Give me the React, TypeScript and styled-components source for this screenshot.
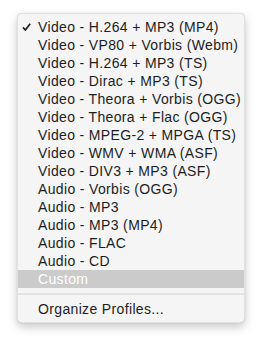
import React from 'react';
import styled, { createGlobalStyle } from 'styled-components';

const GlobalStyle = createGlobalStyle`
    html, body {
        margin: 0;
        padding: 0;
        background: #ffffff;
        width: 262px;
        height: 342px;
        overflow: hidden;
    }
`;

const Page = styled.div`
    padding: 13px 17px 0 17px;
`;

const Menu = styled.div`
    width: 228px;
    box-sizing: border-box;
    padding: 4px 0 4px 0;
    background: #f5f5f5;
    border-radius: 5px;
    border: 1px solid rgba(0, 0, 0, 0.08);
    box-shadow: 0 4px 10px rgba(0, 0, 0, 0.22), 0 0 1px rgba(0, 0, 0, 0.2);
    font-family: "Liberation Sans", Arial, sans-serif;
    font-size: 14px;
    letter-spacing: 0.35px;
    color: #1d1d1d;
`;

const Item = styled.div<{ active?: boolean }>`
    display: flex;
    align-items: center;
    height: 18px;
    padding-left: 20px;
    position: relative;
    background: ${p => (p.active ? '#cbcbcb' : 'transparent')};
    color: ${p => (p.active ? '#ffffff' : '#1d1d1d')};
    white-space: nowrap;
`;

const Check = styled.svg`
    position: absolute;
    left: 4px;
    top: 5px;
    width: 9px;
    height: 8px;
`;

const Separator = styled.div`
    height: 2px;
    margin: 5px 0 5px 0;
    background: #e3e3e3;
`;

const profiles = [
    'Video - H.264 + MP3 (MP4)',
    'Video - VP80 + Vorbis (Webm)',
    'Video - H.264 + MP3 (TS)',
    'Video - Dirac + MP3 (TS)',
    'Video - Theora + Vorbis (OGG)',
    'Video - Theora + Flac (OGG)',
    'Video - MPEG-2 + MPGA (TS)',
    'Video - WMV + WMA (ASF)',
    'Video - DIV3 + MP3 (ASF)',
    'Audio - Vorbis (OGG)',
    'Audio - MP3',
    'Audio - MP3 (MP4)',
    'Audio - FLAC',
    'Audio - CD',
    'Custom',
];

export default function App() {
    return (
        <Page>
            <GlobalStyle />
            <Menu>
                {profiles.map((name, i) => (
                    <Item key={i} active={name === 'Custom'}>
                        {i === 0 && (
                            <Check viewBox="0 0 9 8">
                                <path d="M1 4.4 L3.4 7 L8.2 0.8" fill="none" stroke="#1d1d1d" strokeWidth="1.7" />
                            </Check>
                        )}
                        {name}
                    </Item>
                ))}
                <Separator />
                <Item>Organize Profiles...</Item>
            </Menu>
        </Page>
    );
}
